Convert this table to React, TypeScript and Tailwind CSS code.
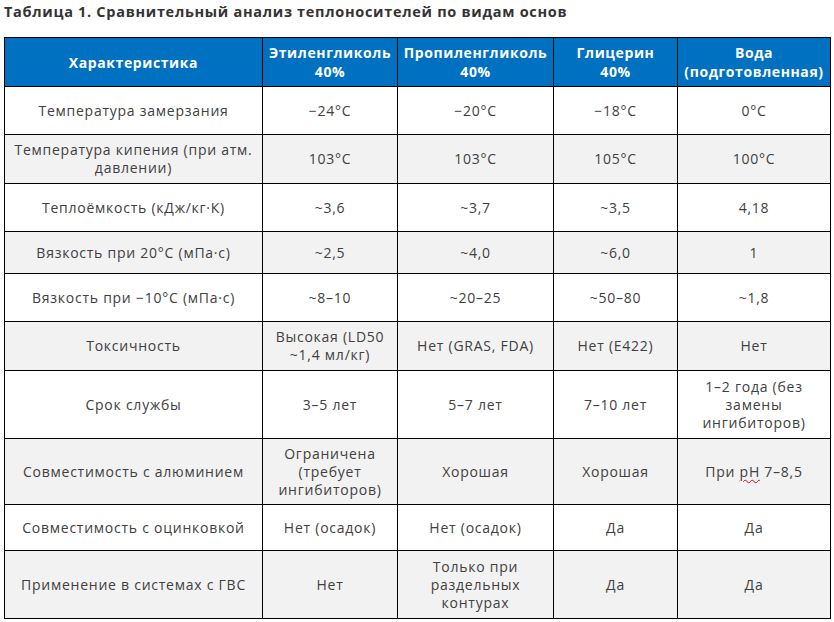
const headers = [
  ['Характеристика'],
  ['Этиленгликоль', '40%'],
  ['Пропиленгликоль', '40%'],
  ['Глицерин', '40%'],
  ['Вода', '(подготовленная)'],
]

type Row = { h: string; cells: React.ReactNode[] }

const rows: Row[] = [
  { h: 'h-[48px]', cells: ['Температура замерзания', '−24°C', '−20°C', '−18°C', '0°C'] },
  { h: 'h-[49px]', cells: [<>Температура кипения (при атм.<br />давлении)</>, '103°C', '103°C', '105°C', '100°C'] },
  { h: 'h-[48px]', cells: ['Теплоёмкость (кДж/кг·К)', '~3,6', '~3,7', '~3,5', '4,18'] },
  { h: 'h-[42px]', cells: ['Вязкость при 20°C (мПа·с)', '~2,5', '~4,0', '~6,0', '1'] },
  { h: 'h-[48px]', cells: ['Вязкость при −10°C (мПа·с)', '~8–10', '~20–25', '~50–80', '~1,8'] },
  { h: 'h-[49px]', cells: ['Токсичность', <>Высокая (LD50<br />~1,4 мл/кг)</>, 'Нет (GRAS, FDA)', 'Нет (E422)', 'Нет'] },
  { h: 'h-[68px]', cells: ['Срок службы', '3–5 лет', '5–7 лет', '7–10 лет', <>1–2 года (без<br />замены<br />ингибиторов)</>] },
  {
    h: 'h-[66px]',
    cells: [
      'Совместимость с алюминием',
      <>Ограничена<br />(требует<br />ингибиторов)</>,
      'Хорошая',
      'Хорошая',
      <>При <span className="underline decoration-wavy decoration-red-600 decoration-1 underline-offset-2">pH</span> 7–8,5</>,
    ],
  },
  { h: 'h-[46px]', cells: ['Совместимость с оцинковкой', 'Нет (осадок)', 'Нет (осадок)', 'Да', 'Да'] },
  { h: 'h-[68px]', cells: ['Применение в системах с ГВС', 'Нет', <>Только при<br />раздельных<br />контурах</>, 'Да', 'Да'] },
]

export default function App() {
  return (
    <div className="w-[834px] h-[622px] bg-white pl-[4px] pt-[3px] font-['Open_Sans',sans-serif] text-[#404040]">
      <h3 className="text-[14.5px] font-bold leading-[18px] text-[#333] tracking-[0.7px]">
        Таблица 1. Сравнительный анализ теплоносителей по видам основ
      </h3>
      <table className="mt-[16px] w-[826px] table-fixed border-collapse border border-black text-[14px] leading-[18px] tracking-[0.75px]">
        <colgroup>
          <col className="w-[258px]" />
          <col className="w-[135px]" />
          <col className="w-[156px]" />
          <col className="w-[124px]" />
          <col className="w-[153px]" />
        </colgroup>
        <thead>
          <tr className="h-[49px] bg-[#0070c0]">
            {headers.map((lines, i) => (
              <th key={i} className="border border-black px-0.5 text-center font-bold text-white leading-[19px] tracking-[0.6px]">
                {lines.map((l, j) => (
                  <div key={j}>{l}</div>
                ))}
              </th>
            ))}
          </tr>
        </thead>
        <tbody>
          {rows.map((row, i) => (
            <tr key={i} className={`${row.h} ${i % 2 === 1 ? 'bg-[#f2f2f2]' : 'bg-white'}`}>
              {row.cells.map((c, j) => (
                <td key={j} className="border border-black px-0.5 text-center align-middle">
                  {c}
                </td>
              ))}
            </tr>
          ))}
        </tbody>
      </table>
    </div>
  )
}
